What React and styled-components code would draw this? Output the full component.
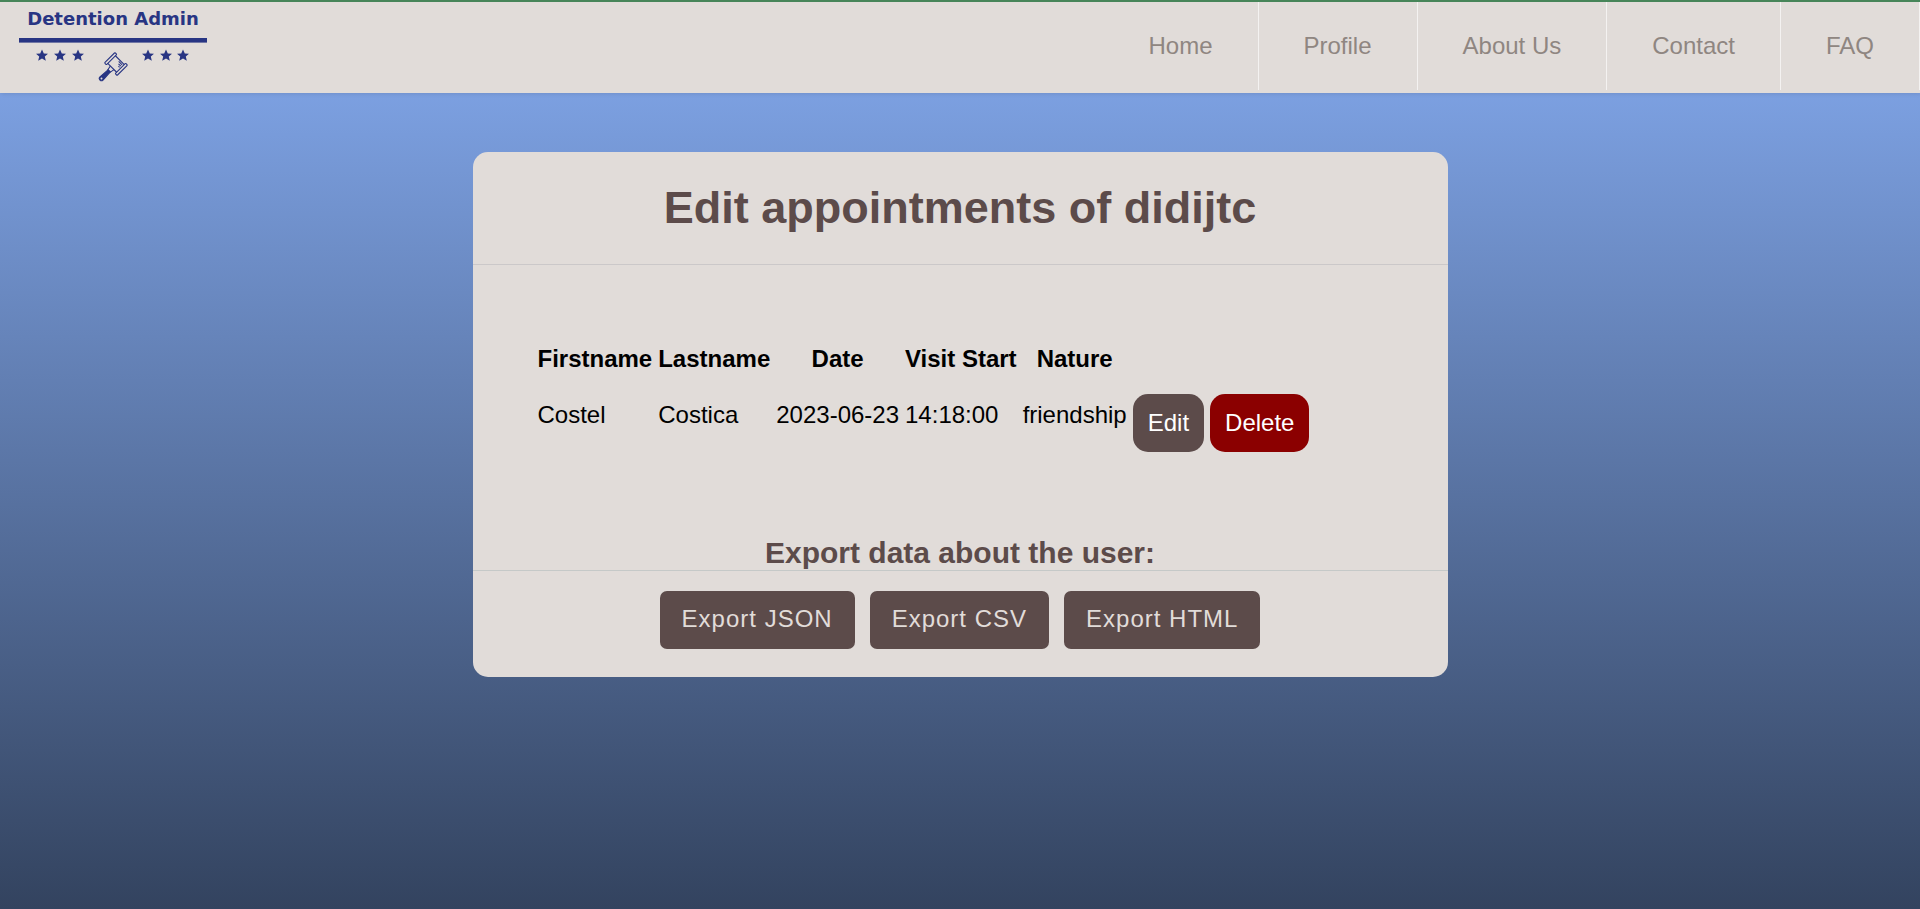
import React from "react";
import styled, { createGlobalStyle } from "styled-components";

const GlobalStyle = createGlobalStyle`
  * { box-sizing: border-box; }
  body {
    margin: 0;
    font-family: Arial, "Liberation Sans", sans-serif;
    font-size: 24px;
    line-height: 28px;
    color: #000;
  }
`;

const Page = styled.div`
  min-height: 100vh;
  background: linear-gradient(180deg, #7ca0e1 10%, #33435f 100%);
`;

const Header = styled.header`
  display: flex;
  justify-content: space-between;
  height: 93px;
  border-top: 2px solid #478559;
  background: #e1dcd9;
  box-shadow: 1px 1px 4px rgba(0, 0, 0, 0.1);
`;

const LogoLink = styled.a`
  display: block;
  svg { display: block; }
`;

const NavList = styled.ul`
  display: flex;
  margin: 0;
  padding: 0;
  list-style: none;
`;

const NavLink = styled.a`
  display: block;
  padding: 30px 45px;
  border-right: 1px solid #f4f2f1;
  color: #8f8681;
  text-decoration: none;
`;

const Main = styled.main`
  padding: 59px 24px;
`;

const Card = styled.section`
  max-width: 975px;
  margin: 0 auto;
  border-radius: 15px;
  background: #e1dcd9;
  color: #5c4b4a;
`;

const Title = styled.h1`
  margin: 0;
  padding: 30px;
  border-bottom: 1px solid #cbc8c9;
  font-size: 45px;
  line-height: 52px;
  text-align: center;
`;

const CardBody = styled.div`
  padding: 80px 62px 84px;
`;

const Table = styled.table`
  border-collapse: collapse;
  color: #000;
`;

const HeadCell = styled.th`
  padding: 0 3px;
`;

const Cell = styled.td`
  padding: ${({ $action }) => ($action ? "21px" : "28px")} 3px 0;
  vertical-align: top;
`;

const RowButton = styled.button`
  display: block;
  padding: 15px;
  border: 0;
  border-radius: 15px;
  background: ${({ $danger }) => ($danger ? "#8b0000" : "#5c4b4a")};
  color: #fff;
  font: inherit;
  cursor: pointer;
`;

const Subtitle = styled.h2`
  margin: 0;
  font-size: 30px;
  line-height: 34px;
  text-align: center;
`;

const Exports = styled.div`
  display: flex;
  flex-wrap: wrap;
  justify-content: center;
  gap: 15px;
  padding: 20px 20px 28px;
  border-top: 1px solid #c5c9c8;
`;

const ExportButton = styled.button`
  padding: 14px 22px 16px;
  border: 0;
  border-radius: 7px;
  background: #5c4b4a;
  color: #e1dcd9;
  font: inherit;
  letter-spacing: 1px;
  cursor: pointer;
`;

const STAR = "M0-6 1.8-2 6-1.8 2.8 1.1 3.8 5.2 0 3-3.8 5.2-2.8 1.1-6-1.8-1.8-2Z";
const STARS = [42, 60, 78, 148, 166, 183];

function Logo() {
  return (
    <svg width="230" height="90" viewBox="0 2 230 90" fill="#283583">
      <text x="113" y="25" textAnchor="middle" fontFamily="DejaVu Sans, sans-serif" fontWeight="700" fontSize="18">
        Detention Admin
      </text>
      <rect x="19" y="38" width="188" height="4.6" />
      {STARS.map((x) => (
        <path key={x} d={STAR} transform={`translate(${x} 55.5)`} />
      ))}
      <g transform="translate(116 64) rotate(45) scale(1.08)" fill="none" stroke="#283583" strokeWidth="1">
        <rect x="-8.2" y="-6.8" width="2.4" height="13.6" rx="0.6" />
        <rect x="5.8" y="-6.8" width="2.4" height="13.6" rx="0.6" />
        <path d="M-5.8-5H5.8M-5.8 5H5.8M0-3.5H4.5M1.5-1.8H4.5M3-.2H4.5" />
        <path d="M-2.4 5-1.6 9H1.6L2.4 5" />
        <path d="M-1.4 9-2 19Q-2 21 0 21T2 19L1.4 9Z" fill="#283583" />
        <circle cx="0" cy="19" r="0.9" fill="#e1dcd9" stroke="none" />
      </g>
    </svg>
  );
}

const NAV = ["Home", "Profile", "About Us", "Contact", "FAQ"];
const COLUMNS = ["Firstname", "Lastname", "Date", "Visit Start", "Nature"];
const APPOINTMENTS = [["Costel", "Costica", "2023-06-23", "14:18:00", "friendship"]];
const FORMATS = ["JSON", "CSV", "HTML"];

export default function App() {
  return (
    <Page>
      <GlobalStyle />
      <Header>
        <LogoLink href="#home" aria-label="Detention Admin">
          <Logo />
        </LogoLink>
        <nav>
          <NavList>
            {NAV.map((label) => (
              <li key={label}>
                <NavLink href="#">{label}</NavLink>
              </li>
            ))}
          </NavList>
        </nav>
      </Header>
      <Main>
        <Card>
          <Title>Edit appointments of didijtc</Title>
          <CardBody>
            <Table>
              <thead>
                <tr>
                  {COLUMNS.map((name) => (
                    <HeadCell key={name} scope="col">{name}</HeadCell>
                  ))}
                </tr>
              </thead>
              <tbody>
                {APPOINTMENTS.map((row) => (
                  <tr key={row.join()}>
                    {row.map((value) => (
                      <Cell key={value}>{value}</Cell>
                    ))}
                    <Cell $action>
                      <RowButton type="button">Edit</RowButton>
                    </Cell>
                    <Cell $action>
                      <RowButton type="button" $danger>Delete</RowButton>
                    </Cell>
                  </tr>
                ))}
              </tbody>
            </Table>
          </CardBody>
          <Subtitle>Export data about the user:</Subtitle>
          <Exports>
            {FORMATS.map((format) => (
              <ExportButton key={format} type="button">Export {format}</ExportButton>
            ))}
          </Exports>
        </Card>
      </Main>
    </Page>
  );
}
